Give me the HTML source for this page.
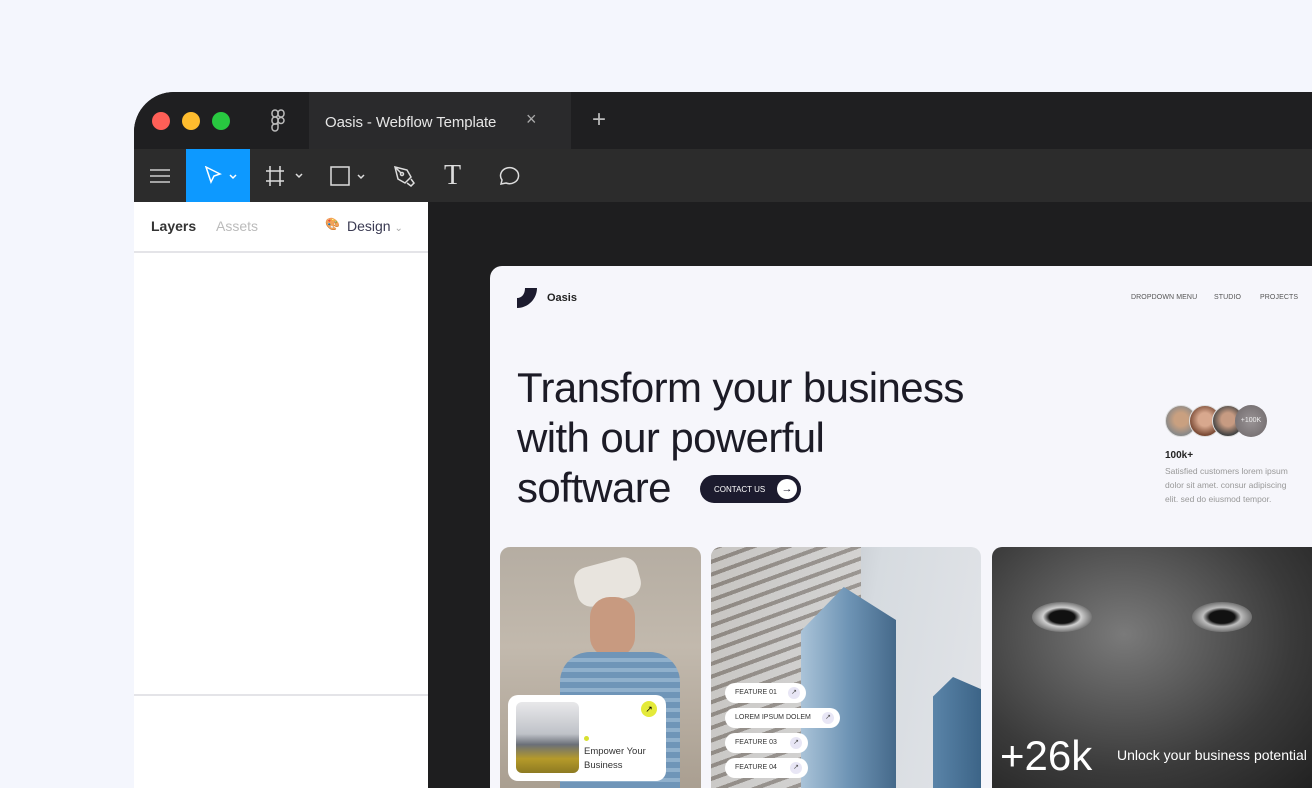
<!DOCTYPE html>
<html><head><meta charset="utf-8"><style>
*{margin:0;padding:0;box-sizing:border-box}
body{width:1312px;height:788px;overflow:hidden;background:#f4f6fd;font-family:"Liberation Sans",sans-serif;position:relative}
.abs{position:absolute}
.win{left:134px;top:92px;width:1178px;height:696px;background:#1e1e1f;border-top-left-radius:40px;overflow:hidden}
.title{left:0;top:0;width:1178px;height:57px;background:#1f1f21}
.tab{left:175px;top:0;width:262px;height:57px;background:#2a2a2c;color:#e6e6e6;font-size:15px;padding:22px 0 0 16px;letter-spacing:-.1px}
.tool{left:0;top:57px;width:1178px;height:53px;background:#2c2c2c}
.panel{left:0;top:110px;width:294px;height:586px;background:#fff}
.site{left:356px;top:174px;width:822px;height:522px;background:#f6f6fb;border-top-left-radius:12px;overflow:hidden}
.nav{font-size:7px;color:#555;letter-spacing:.1px}
.card{border-radius:10px;overflow:hidden}
.pill{background:#fff;border-radius:12px;height:20px;font-size:7px;color:#333;padding:6px 0 0 10px}
.pill i{position:absolute;right:6px;top:4px;width:12px;height:12px;border-radius:50%;background:#e8e6f5;font-style:normal;font-size:7px;text-align:center;line-height:12px;color:#555}
</style></head><body>
<div class="abs win">
 <div class="abs title"></div>
 <div class="abs" style="left:18px;top:20px;width:18px;height:18px;border-radius:50%;background:#fe5f57"></div>
 <div class="abs" style="left:48px;top:20px;width:18px;height:18px;border-radius:50%;background:#febc2e"></div>
 <div class="abs" style="left:78px;top:20px;width:18px;height:18px;border-radius:50%;background:#28c840"></div>
 <svg class="abs" style="left:136px;top:17px" width="16" height="24" viewBox="0 0 16 24" fill="none" stroke="#bbb" stroke-width="1.5"><rect x="2" y="1" width="6" height="7" rx="3"/><rect x="8" y="1" width="6" height="7" rx="3"/><rect x="2" y="8" width="6" height="7" rx="3"/><circle cx="11" cy="11.5" r="3"/><path d="M2 18.5a3 3 0 0 1 3-3.5h3v4a3 3 0 0 1-6 0z"/></svg>
 <div class="abs tab">Oasis - Webflow Template<span style="position:absolute;left:217px;top:17px;color:#aaa;font-size:18px">×</span></div>
 <div class="abs" style="left:458px;top:14px;color:#bbb;font-size:24px">+</div>
 <div class="abs tool"></div>
 <svg class="abs" style="left:16px;top:76px" width="20" height="16" stroke="#ccc" stroke-width="1.5"><path d="M0 2h20M0 8h20M0 14h20"/></svg>
 <div class="abs" style="left:52px;top:57px;width:64px;height:53px;background:#0d99ff"></div>
 <svg class="abs" style="left:70px;top:74px" width="34" height="20" fill="none" stroke="#fff" stroke-width="1.5"><path d="M2 1l14 7-6 2-3 6z"/><path d="M26 9l3 3 3-3"/></svg>
 <svg class="abs" style="left:130px;top:72px" width="44" height="24" fill="none" stroke="#ddd" stroke-width="1.5"><path d="M6 2v20M16 2v20M2 7h18M2 17h18"/><path d="M32 10l3 3 3-3"/></svg>
 <svg class="abs" style="left:196px;top:74px" width="40" height="20" fill="none" stroke="#ddd" stroke-width="1.5"><rect x="1" y="1" width="18" height="18"/><path d="M28 9l3 3 3-3"/></svg>
 <svg class="abs" style="left:259px;top:73px" width="22" height="22" fill="none" stroke="#ddd" stroke-width="1.5"><path d="M2 2l12 3 4 7-6 6-7-4z"/><circle cx="9" cy="9" r="1.5"/><path d="M2 2l6 6M14 18l4 3 3-3-3-4"/></svg>
 <div class="abs" style="left:310px;top:68px;color:#ddd;font-size:28px;font-family:'Liberation Serif',serif">T</div>
 <svg class="abs" style="left:363px;top:73px" width="24" height="22" fill="none" stroke="#ddd" stroke-width="1.5"><path d="M4 19l1-4a9 8 0 1 1 4 3z"/></svg>
 <div class="abs panel">
  <div class="abs" style="left:17px;top:16px;font-size:14px;font-weight:bold;color:#333">Layers</div>
  <div class="abs" style="left:82px;top:16px;font-size:14px;color:#bbb">Assets</div>
  <div class="abs" style="left:191px;top:15px;font-size:12px">🎨</div>
  <div class="abs" style="left:213px;top:16px;font-size:14px;color:#3a3a52">Design <span style="color:#aaa;font-size:10px">⌄</span></div>
  <div class="abs" style="left:0;top:49px;width:294px;height:2px;background:#e4e4e8"></div>
  <div class="abs" style="left:0;top:492px;width:294px;height:2px;background:#e4e4e8"></div>
 </div>
 <div class="abs site">
  <svg class="abs" style="left:27px;top:22px" width="20" height="20" viewBox="0 0 20 20"><path d="M8 0H20C20 11 11 20 0 20V10C5 10 8 6 8 0Z" fill="#1c1b2e"/></svg>
  <div class="abs" style="left:57px;top:26px;font-size:11px;font-weight:bold;color:#222">Oasis</div>
  <div class="abs nav" style="left:641px;top:28px">DROPDOWN MENU</div>
  <div class="abs nav" style="left:724px;top:28px">STUDIO</div>
  <div class="abs nav" style="left:770px;top:28px">PROJECTS</div>
  <div class="abs" style="left:27px;top:97px;font-size:42px;line-height:50px;color:#1c1b26;letter-spacing:-.6px;font-weight:normal">Transform your business<br>with our powerful<br>software</div>
  <div class="abs" style="left:210px;top:209px;width:101px;height:28px;border-radius:14px;background:#1c1b2e;color:#fff;font-size:8px;padding:10px 0 0 14px">CONTACT US<span style="position:absolute;right:4px;top:4px;width:20px;height:20px;border-radius:50%;background:#fff;color:#1c1b2e;font-size:11px;text-align:center;line-height:20px">→</span></div>
  <div class="abs" style="left:675px;top:139px;width:32px;height:32px;border-radius:50%;background:radial-gradient(circle at 50% 45%,#c9a080 30%,#888 70%);border:1px solid #ddd"></div>
  <div class="abs" style="left:699px;top:139px;width:32px;height:32px;border-radius:50%;background:radial-gradient(circle at 50% 45%,#d8a88e 30%,#7a4a35 70%);border:1px solid #ddd"></div>
  <div class="abs" style="left:722px;top:139px;width:32px;height:32px;border-radius:50%;background:radial-gradient(circle at 50% 45%,#c79b82 30%,#444 70%);border:1px solid #ddd"></div>
  <div class="abs" style="left:745px;top:139px;width:32px;height:32px;border-radius:50%;background:radial-gradient(#9a9496,#6c6668);color:#eee;font-size:7px;text-align:center;line-height:32px">+100K</div>
  <div class="abs" style="left:675px;top:184px;font-size:10px;font-weight:bold;color:#222">100k+</div>
  <div class="abs" style="left:675px;top:198px;font-size:8.5px;line-height:14px;color:#999">Satisfied customers lorem ipsum<br>dolor sit amet. consur adipiscing<br>elit. sed do eiusmod tempor.</div>
  <div class="abs card" style="left:10px;top:281px;width:201px;height:250px;background:linear-gradient(180deg,#b5ada2 0%,#c2b9ad 40%,#a89d8f 100%)">
   <div class="abs" style="left:75px;top:15px;width:65px;height:40px;border-radius:14px;background:#e8e4de;transform:rotate(-15deg)"></div>
   <div class="abs" style="left:90px;top:50px;width:45px;height:60px;border-radius:20px;background:#c89a80"></div>
   <div class="abs" style="left:60px;top:105px;width:120px;height:150px;border-radius:30px 30px 0 0;background:repeating-linear-gradient(180deg,#6f95b8 0 6px,#90b0cc 6px 10px)"></div>
   <div class="abs" style="left:8px;top:148px;width:158px;height:86px;border-radius:10px;background:#fff"></div>
   <div class="abs" style="left:16px;top:155px;width:63px;height:71px;border-radius:6px;background:linear-gradient(180deg,#e8e8ea 0%,#bfc2c8 45%,#6a6f78 60%,#b59a2a 80%,#8d7a22 100%)"></div>
   <div class="abs" style="left:84px;top:189px;width:5px;height:5px;border-radius:50%;background:#d8e030"></div>
   <div class="abs" style="left:84px;top:198px;font-size:9.5px;line-height:14px;color:#333">Empower Your<br>Business</div>
   <div class="abs" style="left:141px;top:154px;width:16px;height:16px;border-radius:50%;background:#e4ea3a;font-size:9px;text-align:center;line-height:16px">↗</div>
  </div>
  <div class="abs card" style="left:221px;top:281px;width:270px;height:250px;background:linear-gradient(100deg,#8d8a85 0%,#b8bcc2 30%,#d6dbe0 55%,#e2e4e8 100%)">
   <div class="abs" style="left:0;top:0;width:150px;height:250px;background:repeating-linear-gradient(160deg,#8e8780 0 4px,#d5d3d0 4px 12px);opacity:.8"></div>
   <div class="abs" style="left:90px;top:40px;width:95px;height:220px;background:linear-gradient(90deg,#aac3d8,#6e94b5 50%,#45698a);clip-path:polygon(45% 0,100% 15%,100% 100%,0 100%,0 20%)"></div>
   <div class="abs" style="left:222px;top:130px;width:50px;height:130px;background:linear-gradient(90deg,#5a84a8,#3b6386);clip-path:polygon(40% 0,100% 10%,100% 100%,0 100%,0 15%)"></div>
   <div class="abs pill" style="left:14px;top:136px;width:81px">FEATURE 01<i>↗</i></div>
   <div class="abs pill" style="left:14px;top:161px;width:115px">LOREM IPSUM DOLEM<i>↗</i></div>
   <div class="abs pill" style="left:14px;top:186px;width:83px">FEATURE 03<i>↗</i></div>
   <div class="abs pill" style="left:14px;top:211px;width:83px">FEATURE 04<i>↗</i></div>
  </div>
  <div class="abs card" style="left:502px;top:281px;width:330px;height:250px;background:radial-gradient(ellipse at 40% 35%,#7a7a7a,#3a3a3a 60%,#1e1e1e)">
   <div class="abs" style="left:40px;top:55px;width:60px;height:30px;border-radius:50%;background:radial-gradient(#111 30%,#cfcfcf 45%,#555 80%)"></div>
   <div class="abs" style="left:200px;top:55px;width:60px;height:30px;border-radius:50%;background:radial-gradient(#111 30%,#bdbdbd 45%,#555 80%)"></div>
   <div class="abs" style="left:8px;top:185px;font-size:42px;color:#fff">+26k</div>
   <div class="abs" style="left:125px;top:200px;font-size:14px;color:#fff">Unlock your business potential</div>
  </div>
 </div>
</div>
</body></html>
